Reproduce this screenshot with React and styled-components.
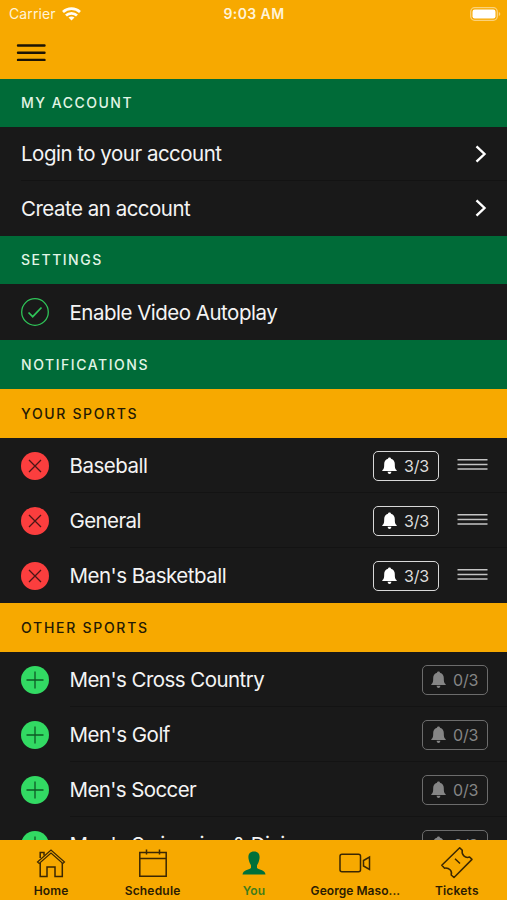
import React from 'react';
import styled, { createGlobalStyle } from 'styled-components'

const GlobalStyle = createGlobalStyle`
    body {
        margin: 0;
        background: #191919;
        font-family: Inter, "Liberation Sans", sans-serif;
    }
    * {
        box-sizing: border-box;
    }
    svg {
        display: block;
        flex-shrink: 0;
    }
`

const Screen = styled.div`
    display: flex;
    flex-direction: column;
    width: 507px;
    height: 900px;
    overflow: hidden;
    background: #191919;
`

const Header = styled.header`
    height: 79px;
    flex-shrink: 0;
    background: #f7a900;
`

const StatusBar = styled.div`
    display: grid;
    grid-template-columns: 1fr auto 1fr;
    align-items: center;
    height: 27px;
    padding: 0 6px 0 9px;
    color: #fff3d8;
`

const Carrier = styled.div`
    display: flex;
    align-items: center;
    gap: 6px;
    font-size: 14px;
    letter-spacing: 0.1px;
`

const Time = styled.div`
    margin-right: 2px;
    font-size: 14px;
    font-weight: 600;
    letter-spacing: 0.4px;
`

const Battery = styled.div`
    display: flex;
    justify-content: flex-end;
`

const MenuButton = styled.button`
    display: block;
    margin: 0;
    padding: 16px 16px;
    border: 0;
    background: none;
`

const List = styled.main`
    flex: 1;
    min-height: 0;
    overflow: hidden;
`

const SectionTitle = styled.h2`
    display: flex;
    align-items: center;
    height: ${props => props.$height || 49}px;
    margin: 0;
    padding-left: 21px;
    font-size: 14px;
    font-weight: 500;
    letter-spacing: ${props => props.$spacing || 1.5}px;
    color: ${props => props.$gold ? '#241a05' : '#e2f5e6'};
    background: ${props => props.$gold ? '#f7a900' : '#006b38'};
`

const Row = styled.div`
    display: flex;
    align-items: center;
    height: ${props => props.$height || 55}px;
    padding: 0 19px 0 21px;
    background: linear-gradient(#131313, #131313) no-repeat ${props => props.$inset || 70}px 100% / 100% ${props => props.$last ? 0 : 1}px;
`

const Label = styled.div`
    flex: 1;
    margin-left: ${props => props.$icon ? 20.5 : 0}px;
    padding-top: ${props => props.$low ? 1 : 0}px;
    font-size: 20.5px;
    line-height: 26px;
    letter-spacing: ${props => props.$spacing || -0.5}px;
    white-space: nowrap;
    color: #f4f4f4;
`

const Badge = styled.div`
    display: flex;
    align-items: center;
    gap: 7px;
    width: 66px;
    height: 30px;
    padding-left: 8px;
    border: 1.5px solid ${props => props.$on ? '#d8d8d8' : '#6c6c6c'};
    border-radius: 5px;
    font-size: 16px;
    letter-spacing: -0.2px;
    color: ${props => props.$on ? '#dcdcdc' : '#858585'};
`

const Handle = styled.div`
    margin-left: 18px;
`

const TabBar = styled.nav`
    display: grid;
    grid-template-columns: repeat(5, 1fr);
    height: 60px;
    flex-shrink: 0;
    background: #f7a900;
`

const Tab = styled.div`
    display: flex;
    flex-direction: column;
    align-items: center;
    padding-top: 5px;
    padding-left: 1px;
    font-size: 12px;
    font-weight: 600;
    line-height: 16px;
    letter-spacing: ${props => props.$tight ? 0.05 : 0.2}px;
    white-space: nowrap;
    color: ${props => props.$active ? '#3f7c1c' : '#2b1c03'};
`

const TabIcon = styled.svg`
    width: 36px;
    height: 36px;
    margin-bottom: 2px;
    fill: none;
    stroke: #3a2703;
    stroke-width: 1.5;
`

const Wifi = () => (
    <svg width="19" height="14" viewBox="0 0 19 14" fill="none" stroke="#fffdf5" strokeWidth="2.7">
        <path d="M1 5C5.8.6 13.2.6 18 5" />
        <path d="M4 8.500C7 5.600 12 5.600 15 8.500" />
        <path d="M9.500 13.600L6.500 10.600C8.200 9.100 10.800 9.100 12.500 10.600Z" fill="#fffdf5" stroke="none" />
    </svg>
)

const BatteryIcon = () => (
    <svg width="31" height="14" viewBox="0 0 31 14">
        <rect x=".7" y=".7" width="26.6" height="12.6" rx="4" fill="none" stroke="#fbd27a" strokeWidth="1.3" />
        <rect x="2.5" y="2.5" width="23" height="9" rx="2.2" fill="#fff" />
        <path d="M28.8 5C30.8 5.8 30.8 8.2 28.8 9Z" fill="#fbd27a" />
    </svg>
)

const Chevron = () => (
    <svg width="14" height="20" viewBox="0 0 14 20" fill="none" stroke="#fff" strokeWidth="2.4">
        <path d="M2.5 2.3L10.5 10L2.5 17.7" />
    </svg>
)

const CheckIcon = () => (
    <svg width="28" height="28" viewBox="0 0 28 28" fill="none" stroke="#2fc458">
        <circle cx="14" cy="14" r="13.3" strokeWidth="1.3" />
        <path d="M7.5 14.5L11.7 18.7L20.5 9.5" strokeWidth="1.7" />
    </svg>
)

const RemoveIcon = () => (
    <svg width="28" height="28" viewBox="0 0 28 28" stroke="#4a1616" strokeWidth="1.3">
        <circle cx="14" cy="14" r="14" fill="#fb3e3e" stroke="none" />
        <path d="M8 8L20 20M20 8L8 20" />
    </svg>
)

const AddIcon = () => (
    <svg width="28" height="28" viewBox="0 0 28 28" stroke="#0e5a25" strokeWidth="1.3">
        <circle cx="14" cy="14" r="14" fill="#32da63" stroke="none" />
        <path d="M14 5.5V22.5M5.5 14H22.5" />
    </svg>
)

const Bell = ({ color }) => (
    <svg width="15" height="18" viewBox="0 0 15 18" fill={color}>
        <path d="M7.5.5C8.300.5 8.9 1 9 1.800C11.6 2.5 12.8 4.5 12.8 7C12.8 10.5 13 12 14.7 13.2V14H.3V13.2C2 12 2.2 10.5 2.2 7C2.2 4.5 3.4 2.5 6 1.8C6.1 1 6.7.5 7.5.5Z" />
        <path d="M5.6 14.8H9.4C9.2 16.2 8.5 17 7.5 17S5.8 16.2 5.6 14.8Z" />
    </svg>
)

const yourSports = [
    { name: 'Baseball' },
    { name: 'General', spacing: -0.6 },
    { name: "Men's Basketball" },
]

const otherSports = [
    { name: "Men's Cross Country", spacing: -0.55 },
    { name: "Men's Golf" },
    { name: "Men's Soccer", spacing: -0.6 },
    { name: "Men's Swimming & Diving", spacing: -0.55 },
]

const App = () => {
    return (
        <Screen>
            <GlobalStyle />
            <Header>
                <StatusBar>
                    <Carrier>Carrier <Wifi /></Carrier>
                    <Time>9:03 AM</Time>
                    <Battery><BatteryIcon /></Battery>
                </StatusBar>
                <MenuButton aria-label="Menu">
                    <svg width="30" height="20" viewBox="0 0 30 20" stroke="#1c1405" strokeWidth="2.4" strokeLinecap="round">
                        <path d="M2 2.5H28.5M2 9.7H28.5M2 16.9H28.5" />
                    </svg>
                </MenuButton>
            </Header>
            <List>
                <SectionTitle $height={47.5}>MY ACCOUNT</SectionTitle>
                <Row $height={54.5} $inset={21}>
                    <Label $low>Login to your account</Label>
                    <Chevron />
                </Row>
                <Row $height={54.5} $last>
                    <Label $low>Create an account</Label>
                    <Chevron />
                </Row>
                <SectionTitle $height={48.5}>SETTINGS</SectionTitle>
                <Row $height={56} $last>
                    <CheckIcon />
                    <Label $icon $low>Enable Video Autoplay</Label>
                </Row>
                <SectionTitle $spacing={1.55}>NOTIFICATIONS</SectionTitle>
                <SectionTitle $gold $spacing={1.65}>YOUR SPORTS</SectionTitle>
                {yourSports.map((sport, i) => <Row key={sport.name} $last={i === 2}>
                    <RemoveIcon />
                    <Label $icon $spacing={sport.spacing}>{sport.name}</Label>
                    <Badge $on><Bell color="#fff" />3/3</Badge>
                    <Handle>
                        <svg width="31" height="15" viewBox="0 0 31 15" stroke="#c4c4c4" strokeWidth="1.5">
                            <path d="M.5 1.7H30.5M.5 6.4H30.5M.5 11.1H30.5" />
                        </svg>
                    </Handle>
                </Row>)}
                <SectionTitle $gold $spacing={1.72}>OTHER SPORTS</SectionTitle>
                {otherSports.map((sport) => <Row key={sport.name}>
                    <AddIcon />
                    <Label $icon $spacing={sport.spacing}>{sport.name}</Label>
                    <Badge><Bell color="#858585" />0/3</Badge>
                </Row>)}
            </List>
            <TabBar>
                <Tab>
                    <TabIcon viewBox="0 0 36 36">
                        <path d="M4.5 17L18 5L31.5 17L29.8 18.5L18 8L6.2 18.5Z" strokeWidth="1.2" />
                        <path d="M7.2 18V31.5H14V22H22V31.5H29.3V18M7.2 13V7.5H11V10.5" />
                    </TabIcon>
                    Home
                </Tab>
                <Tab>
                    <TabIcon viewBox="0 0 36 36">
                        <path d="M4.8 7.5H31.2V31.3H4.8ZM4.8 13.5H31.2M11.5 4.5V9.5M24.5 4.5V9.5" />
                    </TabIcon>
                    Schedule
                </Tab>
                <Tab $active>
                    <TabIcon viewBox="0 0 36 36">
                        <path d="M18 6.5C22.500 6.500 24 9.5 23.5 13.5C23 17.5 21.5 19 21 20.5V23C23.5 25.5 29 24.500 29.5 29.5H6.5C7 24.5 12.5 25.5 15 23V20.5C14.5 19 13 17.5 12.5 13.5C12 9.5 13.5 6.5 18 6.5Z" fill="#00703a" stroke="none" />
                    </TabIcon>
                    You
                </Tab>
                <Tab $tight>
                    <TabIcon viewBox="0 0 36 36">
                        <rect x="3" y="9.3" width="20.5" height="17.5" rx="2" />
                        <path d="M32.5 12V24.5L26.500 21V15.500Z" />
                    </TabIcon>
                    George Maso...
                </Tab>
                <Tab>
                    <TabIcon viewBox="0 0 36 36" strokeLinejoin="round">
                        <path d="M20.7 2.8L23.3 5.4C22.3 9.6 26 13.6 30.600 12L33 14.4L15 32.5L12.2 30C13.600 26 10 22.500 5.600 23.200L2.8 20.3ZM16 13.700L21 18.500" />
                    </TabIcon>
                    Tickets
                </Tab>
            </TabBar>
        </Screen>
    );
}

export default App;
